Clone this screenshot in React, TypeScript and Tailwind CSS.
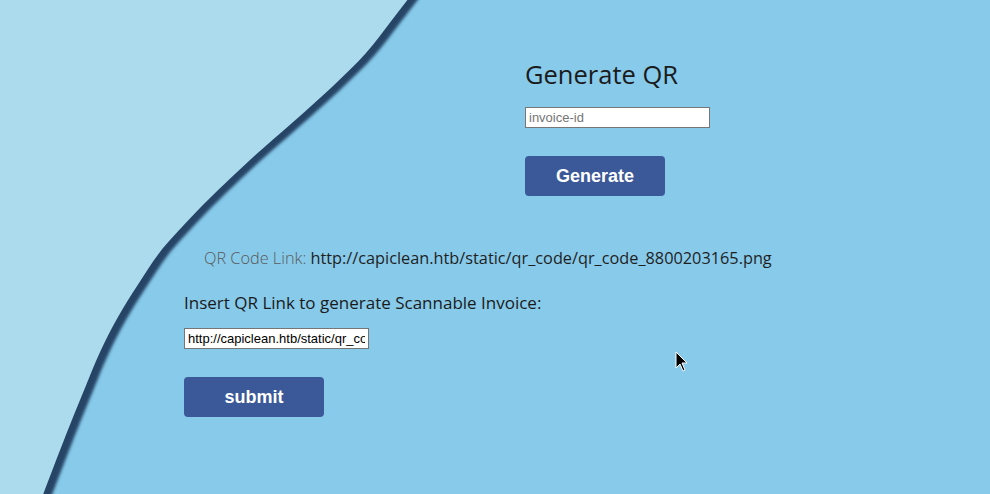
import React from "react";

const edge: [number, number][] = [
  [412, -6],
  [392, 20],
  [366, 53],
  [332, 87],
  [292, 123],
  [250, 160],
  [211, 197],
  [182, 227],
  [160, 252],
  [139, 283],
  [118, 317],
  [101, 350],
  [87, 383],
  [64, 440],
  [41, 500],
];

// catmull-rom through the edge points, closed off to the left
function wavePath(dx: number, dy: number) {
  const p = edge.map(([x, y]) => [x + dx, y + dy]);
  let d = `M-10,-10 L${p[0][0]},${p[0][1]}`;
  for (let i = 0; i < p.length - 1; i++) {
    const p0 = p[i - 1] || p[i];
    const p1 = p[i];
    const p2 = p[i + 1];
    const p3 = p[i + 2] || p2;
    const c1 = [p1[0] + (p2[0] - p0[0]) / 6, p1[1] + (p2[1] - p0[1]) / 6];
    const c2 = [p2[0] - (p3[0] - p1[0]) / 6, p2[1] - (p3[1] - p1[1]) / 6];
    d += ` C${c1[0]},${c1[1]} ${c2[0]},${c2[1]} ${p2[0]},${p2[1]}`;
  }
  return d + " L-10,510 Z";
}

function Wave() {
  return (
    <svg className="absolute inset-0 h-full w-full" viewBox="0 0 990 494" fill="none">
      <defs>
        <filter id="edge-blur" x="-10%" y="-10%" width="120%" height="120%">
          <feGaussianBlur stdDeviation="1.7" />
        </filter>
      </defs>
      <path d={wavePath(8, 3)} fill="#254566" filter="url(#edge-blur)" />
      <path d={wavePath(0, 0)} fill="#acdbed" />
    </svg>
  );
}

function Cursor() {
  return (
    <svg className="absolute left-[675px] top-[351px]" width="14" height="22" viewBox="0 0 14 22">
      <path d="M1,1 L1,17 L5,13 L8,20 L10,19 L7,12 L12,12 Z" fill="#000" stroke="#fff" strokeWidth="1" />
    </svg>
  );
}

export default function App() {
  return (
    <div className="relative h-[494px] w-[990px] overflow-hidden bg-[#87caea] font-['Open_Sans',sans-serif]">
      <Wave />

      <div className="relative flex flex-col">
        <div className="ml-[525px] flex flex-col items-start pt-[58px]">
          <h1 className="text-[25.5px] leading-[32px] font-normal text-[#1b1b1b]">Generate QR</h1>
          <input
            type="text"
            placeholder="invoice-id"
            className="mt-[17px] h-[21px] w-[185px] border border-[#767676] bg-white px-[3px] font-['Liberation_Sans',sans-serif] text-[13px] text-black placeholder:text-[#757575] outline-none"
          />
          <button className="mt-[28px] h-[40px] w-[140px] rounded-[4px] bg-[#3b5998] font-['Liberation_Sans',sans-serif] text-[18px] font-bold text-white">
            Generate
          </button>
        </div>

        <p className="ml-[204px] mt-[50px] text-[16.3px] leading-[24px] text-[#1f1f1f]">
          <span className="font-light text-[#5a5a5a]">QR Code Link: </span>
          http://capiclean.htb/static/qr_code/qr_code_8800203165.png
        </p>

        <div className="ml-[184px] mt-[21px] flex flex-col items-start">
          <label className="text-[17px] leading-[24px] text-[#1b1b1b]">Insert QR Link to generate Scannable Invoice:</label>
          <input
            type="text"
            defaultValue="http://capiclean.htb/static/qr_code/qr_code_8800203165.png"
            className="mt-[13px] h-[21px] w-[185px] border border-[#767676] bg-white px-[3px] font-['Liberation_Sans',sans-serif] text-[13px] text-black outline-none"
          />
          <button className="mt-[28px] h-[40px] w-[140px] rounded-[4px] bg-[#3b5998] font-['Liberation_Sans',sans-serif] text-[18px] font-bold text-white">
            submit
          </button>
        </div>
      </div>

      <Cursor />
    </div>
  );
}
